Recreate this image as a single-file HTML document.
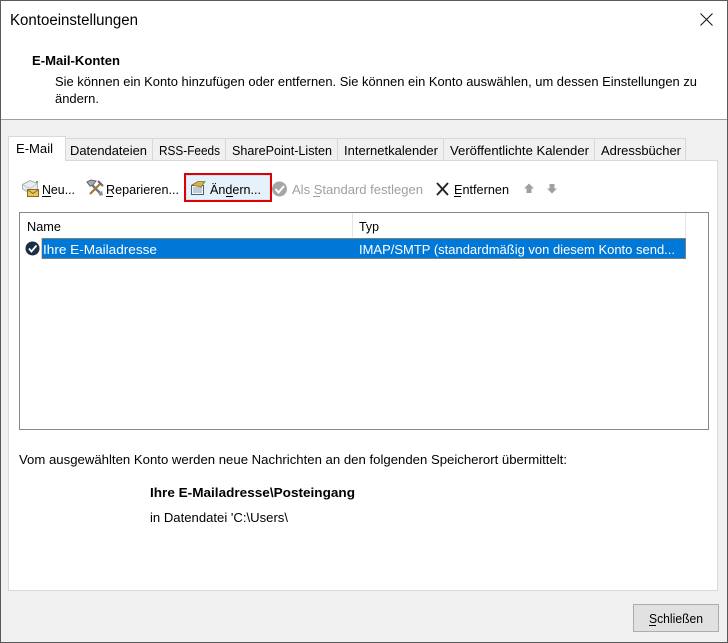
<!DOCTYPE html>
<html lang="de"><head><meta charset="utf-8"><title>Kontoeinstellungen</title>
<style>
html,body{margin:0;padding:0;background:#f0f0f0}
svg{display:block}
text{font-family:"Liberation Sans",sans-serif;font-size:13px;fill:#000;white-space:pre}
.b{font-weight:bold;font-size:13px}
.d{fill:#a0a0a0}
.w{fill:#fff}
</style></head><body>
<svg xmlns="http://www.w3.org/2000/svg" width="728" height="643" viewBox="0 0 728 643">
<rect width="728" height="643" fill="#f0f0f0"/>
<rect y="0" width="728" height="119" fill="#fff"/>
<rect y="119" width="728" height="1" fill="#a0a0a0"/>
<rect x="0" y="0" width="728" height="1" fill="#5a5a5a"/>
<rect x="0" y="642" width="728" height="1" fill="#5a5a5a"/>
<rect x="0" y="0" width="1" height="643" fill="#5a5a5a"/>
<rect x="727" y="0" width="1" height="643" fill="#5a5a5a"/>

<text x="10" y="25" style="font-size:15.500px" textLength="128" lengthAdjust="spacingAndGlyphs">Kontoeinstellungen</text>
<path d="M700.500 13.500L712.500 25.500M712.500 13.500L700.500 25.500" stroke="#111" stroke-width="1" fill="none"/>
<text class="b" x="32" y="65" textLength="88" lengthAdjust="spacingAndGlyphs">E-Mail-Konten</text>
<text x="55" y="86" textLength="642" lengthAdjust="spacingAndGlyphs">Sie können ein Konto hinzufügen oder entfernen. Sie können ein Konto auswählen, um dessen Einstellungen zu</text>
<text x="55" y="103" textLength="44" lengthAdjust="spacingAndGlyphs">ändern.</text>

<!-- panel -->
<rect x="8.500" y="160.500" width="709" height="430" fill="#fff" stroke="#d9d9d9"/>
<!-- tabs -->
<g fill="#f0f0f0" stroke="#d9d9d9">
<rect x="65.500" y="138.500" width="87" height="22"/>
<rect x="152.500" y="138.500" width="73" height="22"/>
<rect x="225.500" y="138.500" width="112" height="22"/>
<rect x="337.500" y="138.500" width="106" height="22"/>
<rect x="443.500" y="138.500" width="151" height="22"/>
<rect x="594.500" y="138.500" width="91" height="22"/>
</g>
<path d="M8.500 161V136.500H65.500V161" fill="#fff" stroke="#d9d9d9"/>
<rect x="9" y="160" width="56" height="2" fill="#fff"/>
<text x="16" y="153" textLength="37" lengthAdjust="spacingAndGlyphs">E-Mail</text>
<text x="70" y="155" textLength="77" lengthAdjust="spacingAndGlyphs">Datendateien</text>
<text x="159" y="155" textLength="61" lengthAdjust="spacingAndGlyphs">RSS-Feeds</text>
<text x="232" y="155" textLength="100" lengthAdjust="spacingAndGlyphs">SharePoint-Listen</text>
<text x="344" y="155" textLength="94" lengthAdjust="spacingAndGlyphs">Internetkalender</text>
<text x="450" y="155" textLength="139" lengthAdjust="spacingAndGlyphs">Veröffentlichte Kalender</text>
<text x="601" y="155" textLength="80" lengthAdjust="spacingAndGlyphs">Adressbücher</text>

<!-- toolbar: Neu icon -->
<path d="M22.500 184.500L30 180.500L37.500 183.500V189L30 193L22.500 189Z" fill="#e8ecf0" stroke="#aab2ba"/>
<path d="M23 185L30 188.500L37 184" fill="none" stroke="#c4cbd2"/>
<rect x="27.500" y="189.500" width="11" height="7" fill="#e9c65c" stroke="#8a6a20"/>
<path d="M28 190L33 193.500L38 190" fill="none" stroke="#8a6a20"/>
<rect x="36" y="181" width="2" height="2" fill="#4cb848"/>
<text x="42" y="194" textLength="33" lengthAdjust="spacingAndGlyphs">Neu...</text>
<rect x="42" y="196" width="9" height="1" fill="#000"/>

<!-- Reparieren icon -->
<path d="M90 183L101 194" stroke="#6f7780" stroke-width="2.400" fill="none"/>
<path d="M100 184L90 194" stroke="#a8763a" stroke-width="2.200" fill="none"/>
<path d="M87 182L91 180L96 181L93 185L90 186Z" fill="#a4acb4" stroke="#666"/>
<path d="M98 181L103 186" stroke="#667" stroke-width="2" fill="none"/>
<path d="M98 193L102 191L103 195L100 196Z" fill="#8b939b"/>
<text x="106" y="194" textLength="73" lengthAdjust="spacingAndGlyphs">Reparieren...</text>
<rect x="106" y="196" width="7" height="1" fill="#000"/>

<!-- Aendern button -->
<rect x="185" y="174" width="86" height="27" fill="#e5f1fb" stroke="#e00000" stroke-width="2"/>
<rect x="186.500" y="175.500" width="83" height="24" fill="#e5f1fb" stroke="#cce4f7"/>
<rect x="191.500" y="185.500" width="12" height="9" fill="#f4f6f8" stroke="#4f5f70"/>
<path d="M193 188H202M193 190H202M193 192H202" stroke="#8aa0b4" fill="none"/>
<path d="M192 185L198 181.500L205 181.500L201 187Z" fill="#d8b24c" stroke="#8e7026" stroke-width="0.800"/>
<rect x="203" y="181" width="2" height="2" fill="#4cb848"/>
<text x="210" y="194" textLength="51" lengthAdjust="spacingAndGlyphs">Ändern...</text>
<rect x="226" y="196" width="7" height="1" fill="#000"/>

<!-- Als Standard -->
<circle cx="279.500" cy="189" r="7.500" fill="#a6a6a6"/>
<path d="M275.500 189L278.500 192.500L284 186" stroke="#fff" stroke-width="2" fill="none"/>
<text class="d" x="292" y="194" textLength="131" lengthAdjust="spacingAndGlyphs">Als Standard festlegen</text>
<rect x="313" y="196" width="7" height="1" fill="#a0a0a0"/>

<!-- Entfernen -->
<path d="M437 183L448 195M448 183L437 195" stroke="#222" stroke-width="1.900" fill="none"/>
<text x="454" y="194" textLength="55" lengthAdjust="spacingAndGlyphs">Entfernen</text>
<rect x="454" y="196" width="7" height="1" fill="#000"/>

<!-- arrows -->
<path d="M529 183.500L534 188.500H531.500V193H526.500V188.500H524Z" fill="#a0a0a0"/>
<path d="M552 193.500L557 188.500H554.500V184H549.500V188.500H547Z" fill="#a0a0a0"/>

<!-- list -->
<rect x="19.500" y="212.500" width="689" height="217" fill="#fff" stroke="#828790"/>
<rect x="352" y="213" width="1" height="24" fill="#e5e5e5"/>
<rect x="685" y="213" width="1" height="24" fill="#e5e5e5"/>
<text x="27" y="231" textLength="34" lengthAdjust="spacingAndGlyphs">Name</text>
<text x="359" y="231" textLength="20" lengthAdjust="spacingAndGlyphs">Typ</text>
<rect x="42" y="238" width="644" height="21" fill="#0078d7"/>
<rect x="41.500" y="238.500" width="644" height="20" fill="none" stroke="#f08a24" stroke-dasharray="1 1"/>
<circle cx="32.500" cy="248.500" r="7" fill="#1a2f47"/>
<path d="M29 248.500L31.500 251.500L36.500 245.500" stroke="#fff" stroke-width="1.800" fill="none"/>
<text class="w" x="43" y="254" textLength="114" lengthAdjust="spacingAndGlyphs">Ihre E-Mailadresse</text>
<text class="w" x="359" y="254" textLength="316" lengthAdjust="spacingAndGlyphs">IMAP/SMTP (standardmäßig von diesem Konto send...</text>

<!-- bottom text -->
<text x="19" y="464" textLength="548" lengthAdjust="spacingAndGlyphs">Vom ausgewählten Konto werden neue Nachrichten an den folgenden Speicherort übermittelt:</text>
<text class="b" x="150" y="497" textLength="205" lengthAdjust="spacingAndGlyphs">Ihre E-Mailadresse\Posteingang</text>
<text x="150" y="522" textLength="138" lengthAdjust="spacingAndGlyphs">in Datendatei 'C:\Users\</text>

<!-- close button -->
<rect x="633.500" y="604.500" width="85" height="27" fill="#e1e1e1" stroke="#adadad"/>
<text x="649" y="623" textLength="54" lengthAdjust="spacingAndGlyphs">Schließen</text>
<rect x="649" y="625" width="7" height="1" fill="#000"/>
</svg>
</body></html>
